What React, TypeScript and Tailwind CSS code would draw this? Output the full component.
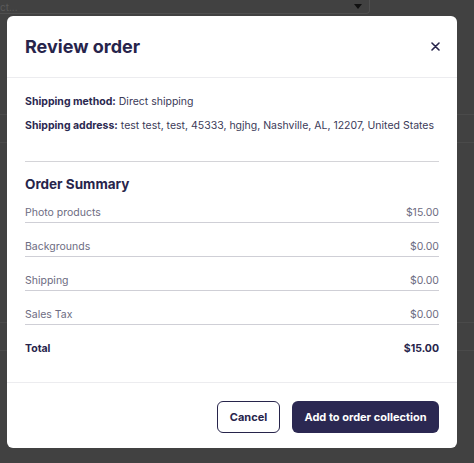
import React from "react";

const rows = [
  { label: "Photo products", value: "$15.00" },
  { label: "Backgrounds", value: "$0.00" },
  { label: "Shipping", value: "$0.00" },
  { label: "Sales Tax", value: "$0.00" },
];

function Backdrop() {
  return (
    <div className="h-[463px] w-[474px] overflow-hidden bg-[#414141]">
      <div className="flex h-[14px] w-[370px] items-center justify-between rounded-br-[4px] border-b border-r border-[#4f4f4f] pr-[7px]">
        <span className="text-[10px] leading-[10px] text-[#5a5a5a]">ct...</span>
        <span className="h-0 w-0 border-x-[4px] border-t-[5px] border-x-transparent border-t-[#111]" />
      </div>
      <div className="mt-[100px] h-px bg-[#4a4a4a]" />
      <div className="mt-[27px] h-px bg-[#4a4a4a]" />
      <div className="mt-[179px] h-px bg-[#4a4a4a]" />
      <div className="mt-[27px] h-px bg-[#4a4a4a]" />
    </div>
  );
}

export default function App() {
  return (
    <div className="relative font-['Inter',sans-serif]">
      <Backdrop />

      <div className="absolute left-[7px] top-[16px] w-[450px] rounded-[6px] bg-white">
        {/* header */}
        <div className="flex h-[62px] items-center justify-between border-b border-[#ececef] px-[18px]">
          <h2 className="text-[18px] font-bold text-[#27244b]">Review order</h2>
          <button className="mr-[-4px] mt-[-1px] flex h-4 w-4 items-center justify-center">
            <svg width="9" height="9" viewBox="0 0 9 9" fill="none">
              <path d="M1 1L8 8M8 1L1 8" stroke="#27244b" strokeWidth="1.6" strokeLinecap="round" />
            </svg>
          </button>
        </div>

        {/* body */}
        <div className="px-[18px] pb-[25px] pt-[16px] text-[10.5px] text-[#3b3a58]">
          <p className="leading-[16px]">
            <span className="font-bold text-[#2b2850]">Shipping method:</span> Direct shipping
          </p>
          <p className="mt-[8px] whitespace-nowrap leading-[16px]">
            <span className="font-bold text-[#2b2850]">Shipping address:</span> test test, test,
            45333, hgjhg, Nashville, AL, 12207, United States
          </p>

          <div className="mt-[27px] border-t border-[#d4d4d8]" />

          <h3 className="mt-[12px] text-[13.5px] font-bold leading-[20px] text-[#27244b]">
            Order Summary
          </h3>

          <div className="mt-[11px]">
            {rows.map((r, i) => (
              <div
                key={r.label}
                className={`flex justify-between border-b border-[#cfcfd6] pb-[1px] leading-[16px] text-[#6d6c82] ${
                  i > 0 ? "mt-[16px]" : ""
                }`}
              >
                <span>{r.label}</span>
                <span>{r.value}</span>
              </div>
            ))}
            <div className="mt-[16px] flex justify-between font-bold leading-[16px] text-[#27244b]">
              <span>Total</span>
              <span>$15.00</span>
            </div>
          </div>
        </div>

        {/* footer */}
        <div className="flex justify-end gap-[12px] border-t border-[#ececef] px-[18px] pb-[15px] pt-[18px]">
          <button className="h-[32px] w-[63px] rounded-[6px] border border-[#27244b] text-[11px] font-bold text-[#27244b]">
            Cancel
          </button>
          <button className="h-[32px] w-[147px] rounded-[6px] bg-[#2b2852] text-[11px] font-bold text-white">
            Add to order collection
          </button>
        </div>
      </div>
    </div>
  );
}
